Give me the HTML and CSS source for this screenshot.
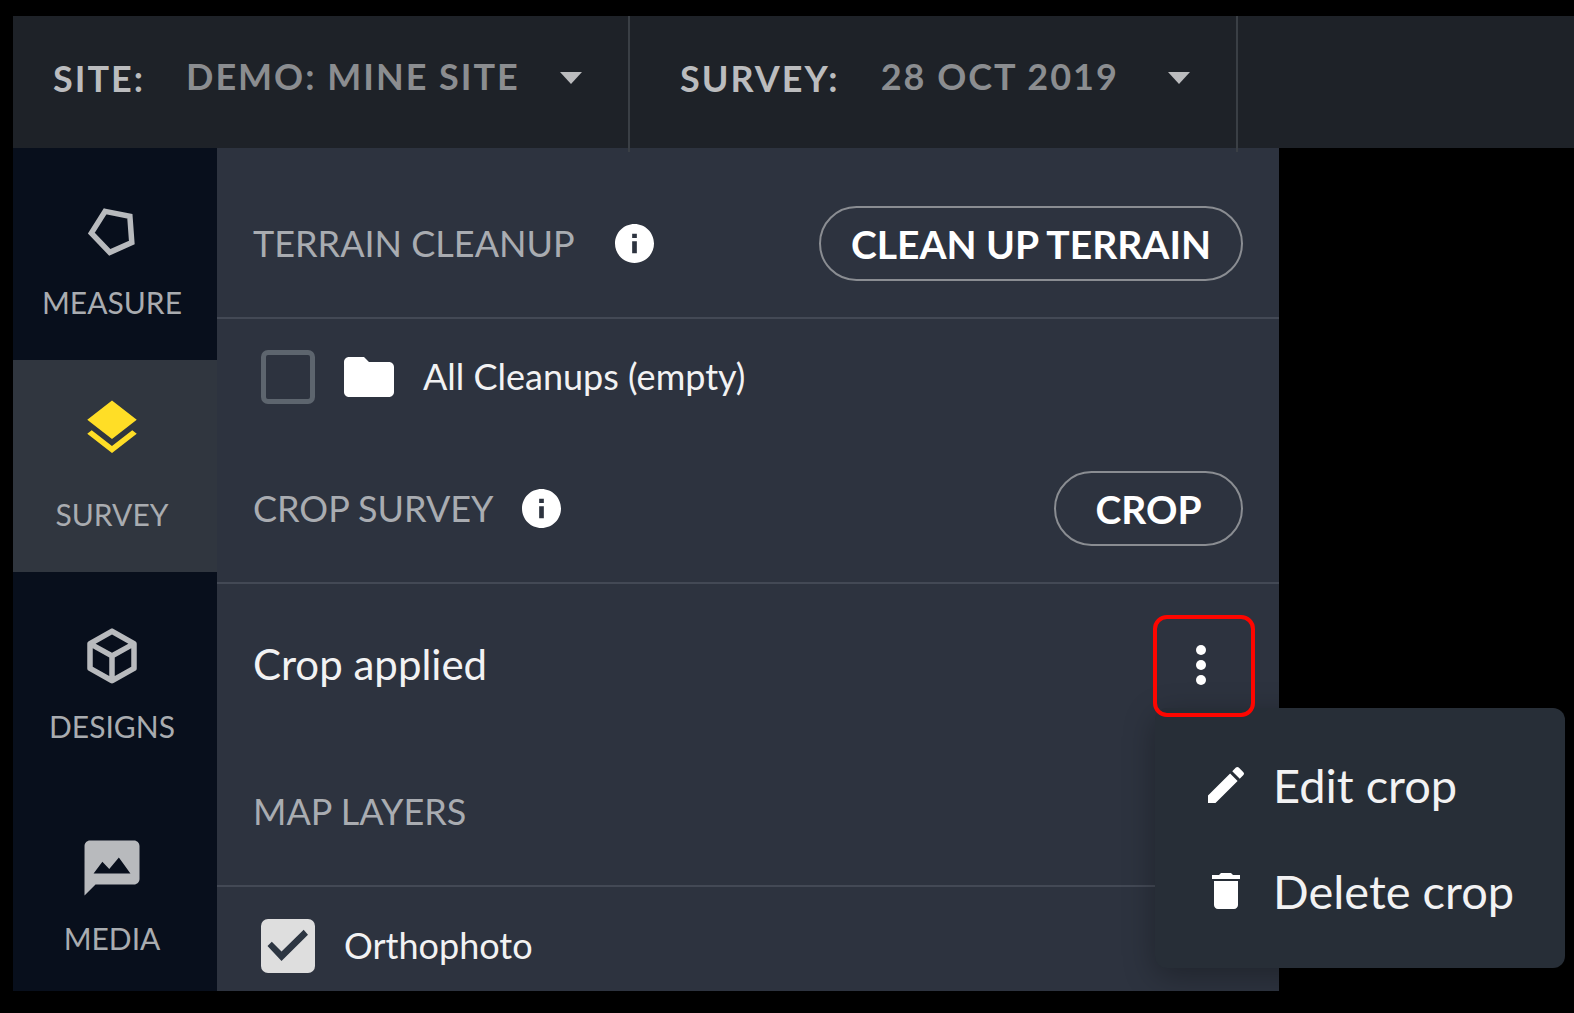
FILE: index.html
```html
<!doctype html>
<html lang="en">
<head>
    <meta charset="UTF-8">
    <meta name="viewport" content="width=device-width, initial-scale=1.0">
    <title>Survey</title>
    <link rel="stylesheet" href="styles.css">
</head>
<body>
    <header class="top-bar">
        <div class="field site">
            <label for="site">SITE:</label>
            <select id="site">
                <option>DEMO: MINE SITE</option>
            </select>
            <svg class="caret" viewBox="0 0 22 12"><path d="M0 0h22L11 12z"/></svg>
        </div>
        <div class="field survey">
            <label for="survey">SURVEY:</label>
            <select id="survey">
                <option>28 OCT 2019</option>
            </select>
            <svg class="caret" viewBox="0 0 22 12"><path d="M0 0h22L11 12z"/></svg>
        </div>
    </header>
    <div class="main">
        <nav class="side-bar">
            <a href="#" class="side-item">
                <svg viewBox="0 0 24 24"><path d="M9.5 4.5L18.5 6.3 19.2 15.8 11.2 19.4 4.5 12.4z" fill="none" stroke="currentColor" stroke-width="2"/></svg>
                <span>MEASURE</span>
            </a>
            <a href="#" class="side-item active">
                <svg viewBox="0 0 24 24"><path d="M11.99 18.54l-7.37-5.73L3 14.07l9 7 9-7-1.63-1.27-7.38 5.74zM12 16l7.36-5.73L21 9l-9-7-9 7 1.63 1.27L12 16z"/></svg>
                <span>SURVEY</span>
            </a>
            <a href="#" class="side-item">
                <svg viewBox="0 0 24 24"><path d="M21 16.5c0 .38-.21.71-.53.88l-7.9 4.44c-.16.12-.36.18-.57.18s-.41-.06-.57-.18l-7.9-4.44A.99.99 0 0 1 3 16.5v-9c0-.38.21-.71.53-.88l7.9-4.44c.16-.12.36-.18.57-.18s.41.06.57.18l7.9 4.44c.32.17.53.5.53.88v9zM12 4.15L6.04 7.5 12 10.85l5.96-3.35L12 4.15zM5 15.91l6 3.38v-6.71L5 9.21v6.7zm14 0v-6.7l-6 3.37v6.71l6-3.38z"/></svg>
                <span>DESIGNS</span>
            </a>
            <a href="#" class="side-item">
                <svg viewBox="0 0 24 24"><path d="M20 2H4c-1.1 0-1.99.9-1.99 2L2 22l4-4h14c1.1 0 2-.9 2-2V4c0-1.1-.9-2-2-2zM5.3 14l3.2-4.3 2.5 2.7L14.5 8.2l4.2 5.8z"/></svg>
                <span>MEDIA</span>
            </a>
        </nav>
        <main class="panel">
            <div class="head">
                <h2>TERRAIN CLEANUP</h2>
                <svg class="info terrain-info" viewBox="2 2 20 20"><path d="M12 2C6.48 2 2 6.48 2 12s4.48 10 10 10 10-4.48 10-10S17.52 2 12 2zm1.2 15h-2.4v-6.2h2.4V17zm0-7.8h-2.4V7h2.4v2.2z"/></svg>
                <button class="pill">CLEAN UP TERRAIN</button>
            </div>
            <div class="row">
                <input type="checkbox" id="cleanups">
                <svg class="folder" viewBox="2 4 20 16"><path d="M10 4H4c-1.1 0-1.99.9-1.99 2L2 18c0 1.1.9 2 2 2h16c1.1 0 2-.9 2-2V8c0-1.1-.9-2-2-2h-8l-2-2z"/></svg>
                <label for="cleanups">All Cleanups (empty)</label>
            </div>
            <div class="head">
                <h2>CROP SURVEY</h2>
                <svg class="info" viewBox="2 2 20 20"><path d="M12 2C6.48 2 2 6.48 2 12s4.48 10 10 10 10-4.48 10-10S17.52 2 12 2zm1.2 15h-2.4v-6.2h2.4V17zm0-7.8h-2.4V7h2.4v2.2z"/></svg>
                <button class="pill">CROP</button>
            </div>
            <div class="applied">
                <p>Crop applied</p>
                <div class="more">
                    <button class="more-btn" aria-label="More">
                        <svg viewBox="0 0 10 40"><circle cx="5" cy="5" r="5"/><circle cx="5" cy="20" r="5"/><circle cx="5" cy="35" r="5"/></svg>
                    </button>
                    <div class="menu">
                        <button>
                            <svg viewBox="0 0 24 24"><path d="M3 17.25V21h3.75L17.81 9.94l-3.75-3.75L3 17.25zM20.71 7.04a1 1 0 0 0 0-1.41l-2.34-2.34a1 1 0 0 0-1.41 0l-1.83 1.83 3.75 3.75 1.83-1.83z"/></svg>
                            Edit crop
                        </button>
                        <button>
                            <svg viewBox="0 0 24 24"><path d="M6 19c0 1.1.9 2 2 2h8c1.1 0 2-.9 2-2V7H6v12zM19 4h-3.5l-1-1h-5l-1 1H5v2h14V4z"/></svg>
                            Delete crop
                        </button>
                    </div>
                </div>
            </div>
            <div class="head">
                <h2>MAP LAYERS</h2>
            </div>
            <div class="row last">
                <input type="checkbox" id="ortho" checked>
                <label for="ortho">Orthophoto</label>
            </div>
        </main>
    </div>
</body>
</html>
```
FILE: styles.css
```css
* {
    padding: 0;
    margin: 0;
    box-sizing: border-box;
}
body {
    height: 100vh;
    padding: 16px 0 22px 13px;
    display: flex;
    flex-direction: column;
    background: #000;
    color: #f2f2f3;
    font-family: Lato, "Open Sans", sans-serif;
    font-size: 36px;
    overflow: hidden;
}
button,select {
    font: inherit;
    color: inherit;
    background: none;
    border: none;
    cursor: pointer;
}
svg {
    fill: currentColor;
    flex-shrink: 0;
}
/* top bar */
.top-bar {
    height: 132px;
    display: flex;
    background: #1e2228;
}
.field {
    height: 136px;
    display: flex;
    align-items: center;
    padding: 0 46px 12px 40px;
    border-right: 2px solid #3a3f45;
    font-weight: 700;
    letter-spacing: 2px;
    color: #bbbcbe;
    position: relative;
    z-index: 1;
}
.site {
    width: 617px;
}
.survey {
    width: 608px;
    padding-left: 50px;
}
.field select {
    flex: 1;
    margin-left: 41px;
    padding-bottom: 4px;
    appearance: none;
    letter-spacing: 2px;
    color: #8b8d90;
}
.caret {
    width: 22px;
    height: 12px;
}
/* left nav */
.main {
    flex: 1;
    min-height: 0;
    display: flex;
}
.side-bar {
    width: 204px;
    background: #080f1c;
    overflow: hidden;
}
.side-item {
    height: 212px;
    padding: 51px 6px 40px 0;
    display: flex;
    flex-direction: column;
    align-items: center;
    justify-content: space-between;
    color: #b8babd;
    font-size: 30px;
    line-height: 36px;
    text-decoration: none;
}
.side-item svg {
    width: 66px;
    height: 66px;
}
.side-item span {
    color: #a9acb0;
}
.side-item.active {
    padding-top: 35px;
    background: #30363f;
}
.side-item.active svg {
    color: #ffde26;
}
/* panel */
.panel {
    width: 1062px;
    padding-top: 22px;
    background: #2d333f;
}
.head {
    height: 149px;
    padding: 0 36px;
    display: flex;
    align-items: center;
    border-bottom: 2px solid #434955;
}
.head h2 {
    padding-bottom: 2px;
    font-size: 36px;
    font-weight: 400;
    color: #a9acb1;
}
.info {
    width: 39px;
    height: 39px;
    margin-left: 28px;
    color: #fff;
}
.terrain-info {
    margin-left: 40px;
}
.pill {
    height: 75px;
    min-width: 189px;
    padding: 0 30px;
    margin-left: auto;
    border: 2px solid #8a8d92;
    border-radius: 38px;
    font-size: 39px;
    font-weight: 700;
    color: #fff;
}
.row {
    height: 116px;
    padding: 0 44px;
    display: flex;
    align-items: center;
    gap: 29px;
}
.row.last {
    height: auto;
    padding-top: 32px;
}
.row input {
    appearance: none;
    width: 54px;
    height: 54px;
    border: 5px solid #5d656e;
    border-radius: 7px;
}
.row input:checked {
    border: none;
    background: #dedede;
}
.row input:checked::before {
    content: "";
    display: block;
    height: 100%;
    background: #2d3642;
    clip-path: polygon(12% 50%, 20% 42%, 38% 60%, 79% 20%, 87% 29%, 38% 78%);
}
.row label {
    padding-bottom: 2px;
}
.folder {
    width: 50px;
    height: 40px;
    color: #fff;
}
.applied {
    padding: 31px 24px 21px 36px;
    display: flex;
    align-items: center;
    justify-content: space-between;
    font-size: 42px;
}
.applied p {
    padding-bottom: 4px;
}
.more {
    position: relative;
}
.more-btn {
    display: flex;
    align-items: center;
    justify-content: center;
    width: 102px;
    height: 102px;
    padding: 0 6px 2px 0;
    border: 4px solid #fe0600;
    border-radius: 14px;
    color: #fff;
    position: relative;
    z-index: 2;
}
.more-btn svg {
    width: 10px;
    height: 40px;
}
.menu {
    position: absolute;
    top: 93px;
    left: 2px;
    z-index: 1;
    width: 410px;
    padding: 24px 0;
    border-radius: 12px;
    background: #272e37;
    box-shadow: 0 8px 32px rgba(0,0,0,0.3);
}
.menu button {
    width: 100%;
    height: 106px;
    padding-left: 47px;
    display: flex;
    align-items: center;
    gap: 23px;
    font-size: 47px;
}
.menu svg {
    width: 48px;
    height: 48px;
    color: #fff;
}
```
